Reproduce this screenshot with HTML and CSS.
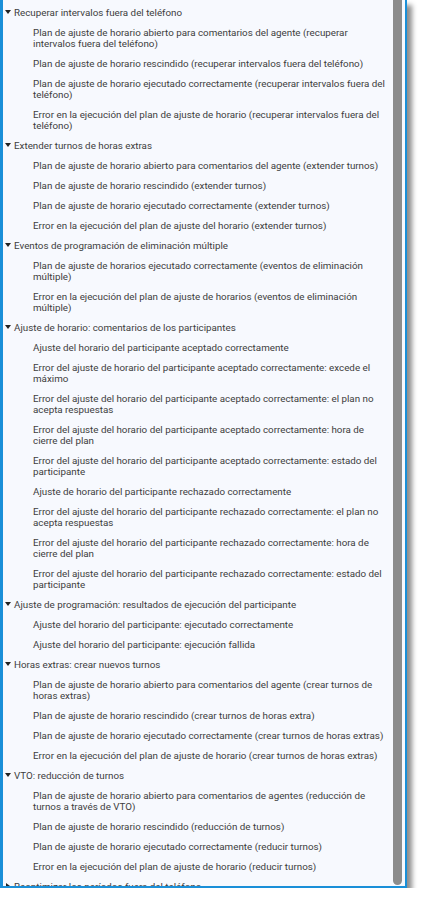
FILE: index.html
```html
<!DOCTYPE html>
<html lang="es">
<head>
  <meta charset="UTF-8">
  <title>Notificaciones</title>
  <link rel="stylesheet" href="styles.css">
</head>
<body>
  <div class="panel">
    <div class="tree">

      <div class="group open">
        <div class="group-title">Recuperar intervalos fuera del teléfono</div>
        <div class="item">Plan de ajuste de horario abierto para comentarios del agente (recuperar intervalos fuera del teléfono)</div>
        <div class="item">Plan de ajuste de horario rescindido (recuperar intervalos fuera del teléfono)</div>
        <div class="item">Plan de ajuste de horario ejecutado correctamente (recuperar intervalos fuera del teléfono)</div>
        <div class="item">Error en la ejecución del plan de ajuste de horario (recuperar intervalos fuera del teléfono)</div>
      </div>

      <div class="group open">
        <div class="group-title">Extender turnos de horas extras</div>
        <div class="item">Plan de ajuste de horario abierto para comentarios del agente (extender turnos)</div>
        <div class="item">Plan de ajuste de horario rescindido (extender turnos)</div>
        <div class="item">Plan de ajuste de horario ejecutado correctamente (extender turnos)</div>
        <div class="item">Error en la ejecución del plan de ajuste del horario (extender turnos)</div>
      </div>

      <div class="group open">
        <div class="group-title">Eventos de programación de eliminación múltiple</div>
        <div class="item">Plan de ajuste de horarios ejecutado correctamente (eventos de eliminación múltiple)</div>
        <div class="item">Error en la ejecución del plan de ajuste de horarios (eventos de eliminación múltiple)</div>
      </div>

      <div class="group open">
        <div class="group-title">Ajuste de horario: comentarios de los participantes</div>
        <div class="item">Ajuste del horario del participante aceptado correctamente</div>
        <div class="item">Error del ajuste de horario del participante aceptado correctamente: excede el máximo</div>
        <div class="item">Error del ajuste del horario del participante aceptado correctamente: el plan no acepta respuestas</div>
        <div class="item">Error del ajuste del horario del participante aceptado correctamente: hora de cierre del plan</div>
        <div class="item">Error del ajuste del horario del participante aceptado correctamente: estado del participante</div>
        <div class="item">Ajuste de horario del participante rechazado correctamente</div>
        <div class="item">Error del ajuste del horario del participante rechazado correctamente: el plan no acepta respuestas</div>
        <div class="item">Error del ajuste del horario del participante rechazado correctamente: hora de cierre del plan</div>
        <div class="item">Error del ajuste del horario del participante rechazado correctamente: estado del participante</div>
      </div>

      <div class="group open">
        <div class="group-title">Ajuste de programación: resultados de ejecución del participante</div>
        <div class="item">Ajuste del horario del participante: ejecutado correctamente</div>
        <div class="item">Ajuste del horario del participante: ejecución fallida</div>
      </div>

      <div class="group open">
        <div class="group-title">Horas extras: crear nuevos turnos</div>
        <div class="item">Plan de ajuste de horario abierto para comentarios del agente (crear turnos de horas extras)</div>
        <div class="item">Plan de ajuste de horario rescindido (crear turnos de horas extra)</div>
        <div class="item">Plan de ajuste de horario ejecutado correctamente (crear turnos de horas extras)</div>
        <div class="item">Error en la ejecución del plan de ajuste de horario (crear turnos de horas extras)</div>
      </div>

      <div class="group open">
        <div class="group-title">VTO: reducción de turnos</div>
        <div class="item">Plan de ajuste de horario abierto para comentarios de agentes (reducción de turnos a través de VTO)</div>
        <div class="item">Plan de ajuste de horario rescindido (reducción de turnos)</div>
        <div class="item">Plan de ajuste de horario ejecutado correctamente (reducir turnos)</div>
        <div class="item">Error en la ejecución del plan de ajuste de horario (reducir turnos)</div>
      </div>

      <div class="group">
        <div class="group-title">Reoptimizar los períodos fuera del teléfono</div>
      </div>

    </div>
    <div class="scrollbar"><div class="thumb"></div></div>
  </div>
</body>
</html>
```

FILE: styles.css
```css
body {
  margin: 0;
  background: #fff;
  font-family: Roboto, "Liberation Sans", sans-serif;
}
.panel {
  display: flex;
  width: 402px;
  height: 886px;
  background: #f7f9fe;
  border-left: 3px solid #1a8fd8;
  border-right: 2px solid #1a8fd8;
  border-bottom: 2px solid #1a8fd8;
  box-shadow: 5px 5px 5px rgba(0, 0, 0, 0.45);
  overflow: hidden;
}
.tree {
  flex: 1;
  padding-top: 2px;
  overflow: hidden;
  font-size: 9.8px;
  line-height: 11px;
  color: #3d3d3d;
}
.group-title {
  position: relative;
  padding: 4.5px 0 4.5px 11px;
  white-space: nowrap;
}
.group-title::before {
  content: "";
  position: absolute;
  left: 2px;
  top: 8px;
  border-left: 3px solid transparent;
  border-right: 3px solid transparent;
  border-top: 4px solid #222;
}
.group:not(.open) .group-title::before {
  left: 3px;
  top: 7px;
  border-top: 3px solid transparent;
  border-bottom: 3px solid transparent;
  border-left: 4px solid #222;
  border-right: none;
}
.item {
  padding: 4.5px 3px 4.5px 30px;
}
.scrollbar {
  width: 12px;
  flex-shrink: 0;
}
.thumb {
  width: 9px;
  height: 885px;
  background: #8c8c8c;
  border-radius: 0 0 5px 5px;
}
```
